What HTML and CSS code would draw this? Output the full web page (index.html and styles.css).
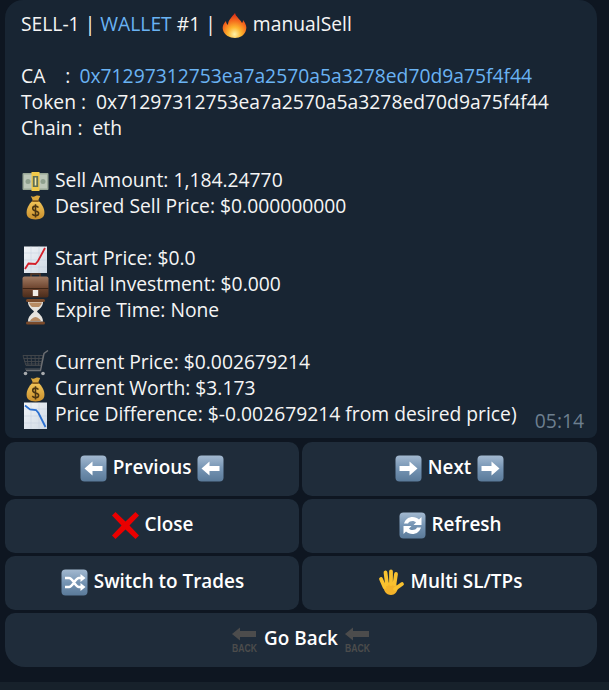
FILE: index.html
```html
<!DOCTYPE html>
<html lang="en">
<head>
  <meta charset="UTF-8">
  <meta name="viewport" content="width=device-width, initial-scale=1.0">
  <title>manualSell</title>
  <link rel="stylesheet" href="styles.css">
</head>
<body>
  <!-- shared emoji drawings -->
  <svg class="defs" aria-hidden="true">
    <defs>
      <linearGradient id="keyBlue" x1="0" y1="0" x2="0" y2="1">
        <stop offset="0" stop-color="#a3b9d0"/>
        <stop offset="0.5" stop-color="#7594b3"/>
        <stop offset="1" stop-color="#5a7a99"/>
      </linearGradient>
      <linearGradient id="gold" x1="0" y1="0" x2="0" y2="1">
        <stop offset="0" stop-color="#f2c65a"/>
        <stop offset="1" stop-color="#c98f2c"/>
      </linearGradient>
      <linearGradient id="paper" x1="0" y1="0" x2="1" y2="1">
        <stop offset="0" stop-color="#f2f5f8"/>
        <stop offset="1" stop-color="#cfd9e4"/>
      </linearGradient>
      <linearGradient id="leather" x1="0" y1="0" x2="0" y2="1">
        <stop offset="0" stop-color="#a07a62"/>
        <stop offset="0.55" stop-color="#6f4630"/>
        <stop offset="1" stop-color="#4a2c1b"/>
      </linearGradient>
      <radialGradient id="flame" cx="0.5" cy="0.85" r="0.8">
        <stop offset="0" stop-color="#fff3a8"/>
        <stop offset="0.35" stop-color="#fdb52e"/>
        <stop offset="0.7" stop-color="#f4661c"/>
        <stop offset="1" stop-color="#d9301a"/>
      </radialGradient>

      <symbol id="fire" viewBox="0 0 27 27">
        <path d="M14 1c1 4 5 6 7 10 1-1 1-2 1-3 3 4 4 7 3 10-1 5-6 8-11 8S3 23 2 18c-1-4 1-7 3-9 0 2 1 3 2 4 0-5 4-8 7-12z" fill="url(#flame)"/>
      </symbol>
      <symbol id="bill" viewBox="0 0 27 27">
        <rect x="0.500" y="5" width="26" height="17" rx="1" fill="#98a796"/>
        <rect x="2" y="6.500" width="23" height="14" fill="#bcc7b8"/>
        <circle cx="6" cy="13.500" r="2.500" fill="#8ea08d"/>
        <circle cx="21" cy="13.500" r="2.500" fill="#8ea08d"/>
        <rect x="9.500" y="4" width="8" height="19" fill="#f0c94a"/>
        <rect x="10.800" y="8" width="5.400" height="11" fill="#5f6f55"/>
        <rect x="12.700" y="9.500" width="1.600" height="8" fill="#f4e9a8"/>
      </symbol>
      <symbol id="bag" viewBox="0 0 27 27">
        <g transform="translate(13.500 13.500) scale(.85 .95) translate(-13.500 -13.500)">
          <path d="M8 1.500c2 .8 3.500.8 5.500 0s3.500-.6 5.500 0l-2.500 5h-6z" fill="#d9a63c"/>
          <path d="M10 6.500h7c4 3 7 8 7 12.500 0 5-4 7-10.500 7S3 24 3 19c0-4.500 3-9.500 7-12.500z" fill="url(#gold)"/>
          <rect x="9.500" y="5.800" width="8" height="2" rx="1" fill="#8a5d1c"/>
          <path d="M17 13.500c-1-1-2-1.500-3.500-1.500-2 0-3.300 1-3.300 2.600 0 3.400 7 1.800 7 5 0 1.600-1.500 2.500-3.700 2.500-1.500 0-2.800-.5-3.800-1.600M13.500 10v14" fill="none" stroke="#4a3412" stroke-width="1.800"/>
        </g>
      </symbol>
      <symbol id="chartUp" viewBox="0 0 27 27">
        <rect x="2" y="0.500" width="23" height="26.500" fill="url(#paper)"/>
        <path d="M2 7h23M2 14h23M2 21h23M9 0.500v26.500M17 0.500v26.500" fill="none" stroke="#c3cfdc" stroke-width="0.500"/>
        <path d="M3 23l3.500-5.500 7 .5 2.500-3 7-13" fill="none" stroke="#d5202a" stroke-width="1.800"/>
      </symbol>
      <symbol id="chartDown" viewBox="0 0 27 27">
        <rect x="2" y="0.500" width="23" height="26.500" fill="url(#paper)"/>
        <path d="M2 7h23M2 14h23M2 21h23M9 0.500v26.500M17 0.500v26.500" fill="none" stroke="#c3cfdc" stroke-width="0.500"/>
        <path d="M3 3.500l5 4 6 .5 2.500 3 7 14" fill="none" stroke="#2a6fd0" stroke-width="1.800"/>
      </symbol>
      <symbol id="briefcase" viewBox="0 0 27 27">
        <path d="M9 5V2h9v3" fill="none" stroke="#5b3a26" stroke-width="1.600"/>
        <rect x="0.500" y="4.500" width="26" height="21" rx="2" fill="url(#leather)"/>
        <rect x="0.500" y="16" width="26" height="1" fill="#3d2416"/>
        <rect x="10.800" y="18" width="5.400" height="6" fill="#f0ece6"/>
      </symbol>
      <symbol id="hourglass" viewBox="0 0 27 27">
        <rect x="4" y="1" width="19" height="3" rx="1.500" fill="#7a4a2a"/>
        <rect x="4" y="23.500" width="19" height="3" rx="1.500" fill="#7a4a2a"/>
        <path d="M6 4h15c0 5-4 7-6 9.500 2 2.500 6 4.500 6 10H6c0-5.500 4-7.500 6-10C10 11 6 9 6 4z" fill="#e6e3de"/>
        <path d="M7 4.500h13c-.5 2-2 3.500-3 4.500h-7c-1-1-2.500-2.500-3-4.500zM8 23c1-2 3-3.500 5.500-4 2.500.5 4.500 2 5.500 4z" fill="#b78b63"/>
      </symbol>
      <symbol id="cart" viewBox="0 0 27 27">
        <g fill="none" stroke="#45484c" stroke-width="0.900">
          <path d="M1 5.500h20l-2 10H4zM1.500 8.500h18.800M2.300 11.500h17.500M3.200 14h16M5 5.500l1 10M9 5.500l.8 10M13 5.500l.5 10M17 5.500l-.5 10"/>
        </g>
        <path d="M26 0.500l-4 3-3.500 17H4" fill="none" stroke="#6c6f73" stroke-width="1.400"/>
        <path d="M3 19h15" fill="none" stroke="#55585c" stroke-width="1"/>
        <circle cx="3.500" cy="23.500" r="1.800" fill="#a9acaf"/>
        <circle cx="21" cy="23.500" r="1.800" fill="#a9acaf"/>
      </symbol>
      <symbol id="keyLeft" viewBox="0 0 27 27">
        <rect x="0.500" y="0.500" width="26" height="26" rx="4" fill="url(#keyBlue)"/>
        <path d="M4.500 13.500l8-7v4.500h10v5h-10v4.500z" fill="#fff"/>
      </symbol>
      <symbol id="keyRight" viewBox="0 0 27 27">
        <rect x="0.500" y="0.500" width="26" height="26" rx="4" fill="url(#keyBlue)"/>
        <path d="M22.500 13.500l-8-7v4.500h-10v5h10v4.500z" fill="#fff"/>
      </symbol>
      <symbol id="cross" viewBox="0 0 27 27">
        <path d="M3.500 0L13.500 9.500 23.500 0 27 3.500l-9.500 10L27 23.500 23.500 27l-10-9.500L3.500 27 0 23.500l9.500-10L0 3.500z" fill="#ea0000"/>
      </symbol>
      <symbol id="refresh" viewBox="0 0 27 27">
        <rect x="0.500" y="0.500" width="26" height="26" rx="4" fill="url(#keyBlue)"/>
        <path d="M5 11.500C6.500 7 10 5 13.500 5c2.500 0 5 1 6.500 2.500L22.500 5v8h-8l2.500-2.500c-1-1-2-1.500-3.500-1.500-2 0-3.500.7-4.500 2.500zM22 15.500C20.500 20 17 22 13.500 22c-2.500 0-5-1-6.500-2.500L4.500 22v-8h8L10 16.500c1 1 2 1.500 3.500 1.500 2 0 3.500-.7 4.500-2.500z" fill="#fff"/>
      </symbol>
      <symbol id="shuffle" viewBox="0 0 27 27">
        <rect x="0.500" y="0.500" width="26" height="26" rx="4" fill="url(#keyBlue)"/>
        <path d="M4 9h4c4 0 6 9 10 9h2M4 18h4c4 0 6-9 10-9h2" fill="none" stroke="#fff" stroke-width="2.400"/>
        <path d="M19.500 5l5 4-5 4zM19.500 14l5 4-5 4z" fill="#fff"/>
      </symbol>
      <symbol id="hand" viewBox="0 0 27 27">
        <path d="M5 14c0 8 3 12 8 12 4 0 6-3 7-7l-3-6z" fill="#f3b32a"/>
        <g fill="none" stroke="#f9c22f" stroke-width="3.800" stroke-linecap="round">
          <path d="M6.500 18L3 10M9 15L7.500 3.500M13 15V2.500M16.500 15L18 5M17 20l7-5"/>
        </g>
      </symbol>
      <symbol id="back" viewBox="0 0 27 27">
        <path d="M1 8L9 1.500V5h16v6H9v3.500z" fill="#4c4c4c"/>
        <text x="13.500" y="25.500" text-anchor="middle" textLength="25" lengthAdjust="spacingAndGlyphs" class="back-label">BACK</text>
      </symbol>
    </defs>
  </svg>

  <div class="chat">
    <div class="message">
      <div class="bubble">
        <div>SELL-1 | <span class="link">WALLET</span> #1 | <svg class="emoji emoji-inline"><use href="#fire"/></svg> manualSell</div>
        <div class="blank"></div>
        <div>CA &nbsp;&nbsp; : <span class="link ca-value">0x71297312753ea7a2570a5a3278ed70d9a75f4f44</span></div>
        <div>Token : &nbsp;0x71297312753ea7a2570a5a3278ed70d9a75f4f44</div>
        <div>Chain : &nbsp;eth</div>
        <div class="blank"></div>
        <div><svg class="emoji"><use href="#bill"/></svg> Sell Amount: 1,184.24770</div>
        <div><svg class="emoji"><use href="#bag"/></svg> Desired Sell Price: $0.000000000</div>
        <div class="blank"></div>
        <div><svg class="emoji"><use href="#chartUp"/></svg> Start Price: $0.0</div>
        <div><svg class="emoji"><use href="#briefcase"/></svg> Initial Investment: $0.000</div>
        <div><svg class="emoji"><use href="#hourglass"/></svg> Expire Time: None</div>
        <div class="blank"></div>
        <div><svg class="emoji"><use href="#cart"/></svg> Current Price: $0.002679214</div>
        <div><svg class="emoji"><use href="#bag"/></svg> Current Worth: $3.173</div>
        <div><svg class="emoji"><use href="#chartDown"/></svg> Price Difference: $-0.002679214 from desired price)</div>
        <span class="time">05:14</span>
      </div>

      <div class="keyboard">
        <button class="key"><svg class="emoji"><use href="#keyLeft"/></svg> Previous <svg class="emoji"><use href="#keyLeft"/></svg></button>
        <button class="key"><svg class="emoji"><use href="#keyRight"/></svg> Next <svg class="emoji"><use href="#keyRight"/></svg></button>
        <button class="key"><svg class="emoji"><use href="#cross"/></svg> Close</button>
        <button class="key"><svg class="emoji"><use href="#refresh"/></svg> Refresh</button>
        <button class="key"><svg class="emoji"><use href="#shuffle"/></svg> Switch to Trades</button>
        <button class="key"><svg class="emoji"><use href="#hand"/></svg> Multi SL/TPs</button>
        <button class="key key-wide"><svg class="emoji"><use href="#back"/></svg> Go Back <svg class="emoji"><use href="#back"/></svg></button>
      </div>
    </div>
    <div class="composer"></div>
  </div>
</body>
</html>
```

FILE: styles.css
```css
/* General Styles */
html, body {
  margin: 0;
  padding: 0;
  height: 100%;
}

body {
  background: #0e1621;
  color: #f5f5f5;
  font-family: 'Open Sans', sans-serif;
  font-size: 19.3px;
  line-height: 26px;
  overflow: hidden;
}

/* hidden without display: none, gradients stop resolving otherwise */
.defs {
  position: absolute;
  width: 0;
  height: 0;
}

.chat {
  display: flex;
  flex-direction: column;
  height: 690px;
}

.message {
  flex: 1;
  padding: 0 12px 0 5px;
}

/* Message bubble */
.bubble {
  position: relative;
  background: #182533;
  border-radius: 18px 18px 8px 8px;
  padding: 11px 16px 10px;
  height: 417px;
  white-space: nowrap;
}

.blank {
  height: 26px;
}

.link {
  color: #6ab3f3;
}

.ca-value {
  margin-left: 4px;
}

.emoji {
  width: 27px;
  height: 27px;
  margin: -6px 1px;
  vertical-align: middle;
}

.emoji-inline {
  margin: -6px 0;
}

.time {
  position: absolute;
  right: 13px;
  bottom: 4px;
  color: #6d7f8f;
}

/* Inline keyboard */
.keyboard {
  display: grid;
  grid-template-columns: 294px 1fr;
  grid-auto-rows: 54px;
  gap: 3px;
  margin-top: 4px;
}

.key {
  background: #1f2c3a;
  border: none;
  border-radius: 10px;
  color: #fff;
  font-family: inherit;
  font-size: 18.9px;
  font-weight: 600;
  line-height: 26px;
  padding: 0 0 4px;
  white-space: nowrap;
}

.key-wide {
  grid-column: span 2;
  border-radius: 10px 10px 20px 20px;
}

.back-label {
  fill: #4c4c4c;
  font-family: 'Liberation Sans', sans-serif;
  font-size: 10px;
  font-weight: 700;
}

.composer {
  height: 8px;
  background: #17212b;
}
```
